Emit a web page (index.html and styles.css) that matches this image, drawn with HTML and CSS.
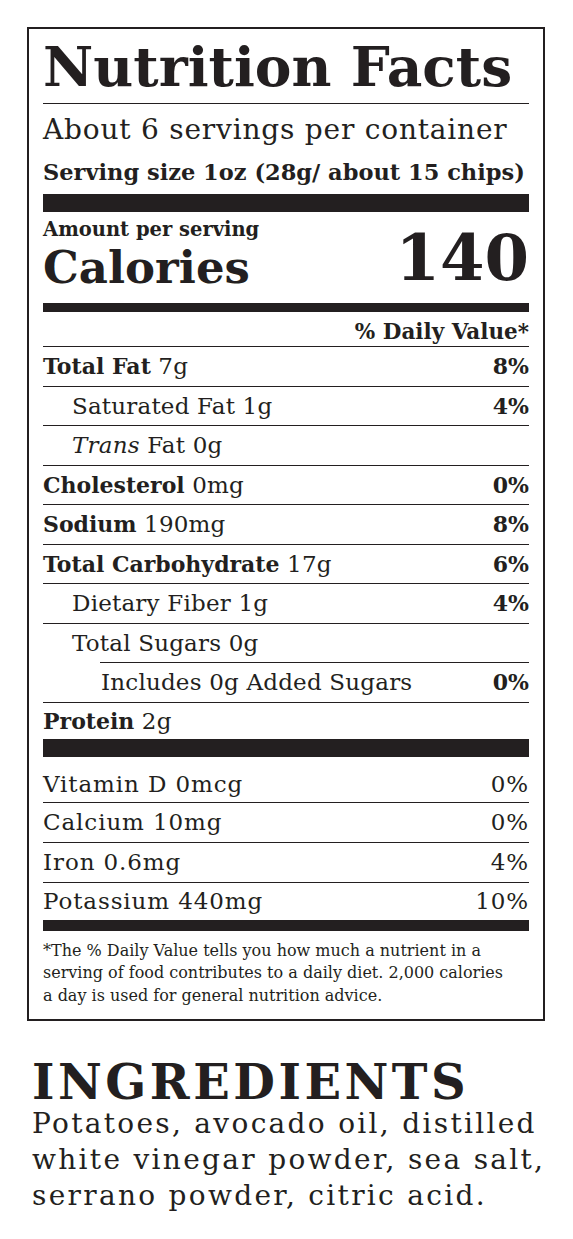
FILE: index.html
```html
<!DOCTYPE html>
<html lang="en">
<head>
    <meta charset="UTF-8">
    <meta name="viewport" content="width=device-width, initial-scale=1.0">
    <title>Nutrition Facts</title>
    <link rel="stylesheet" href="styles.css">
</head>
<body>
    <div class="label">
        <h1 class="title">Nutrition Facts</h1>
        <div class="servings">
            <p class="per-container">About 6 servings per container</p>
            <p class="size">Serving size 1oz (28g/ about 15 chips)</p>
        </div>
        <div class="calories">
            <div class="cal-left">
                <div class="amount">Amount per serving</div>
                <div class="cal-word">Calories</div>
            </div>
            <div class="cal-num">140</div>
        </div>
        <div class="dv-head">% Daily Value*</div>

        <div class="row"><span><b>Total Fat</b> 7g</span><b>8%</b></div>
        <div class="row sub"><span>Saturated Fat 1g</span><b>4%</b></div>
        <div class="row sub"><span><i>Trans</i> Fat 0g</span></div>
        <div class="row"><span><b>Cholesterol</b> 0mg</span><b>0%</b></div>
        <div class="row"><span><b>Sodium</b> 190mg</span><b>8%</b></div>
        <div class="row"><span><b>Total Carbohydrate</b> 17g</span><b>6%</b></div>
        <div class="row sub"><span>Dietary Fiber 1g</span><b>4%</b></div>
        <div class="row sub short-line"><span>Total Sugars 0g</span></div>
        <div class="row subsub"><span>Includes 0g Added Sugars</span><b>0%</b></div>
        <div class="row last"><span><b>Protein</b> 2g</span></div>

        <div class="vitamins">
            <div class="row first"><span>Vitamin D 0mcg</span><span>0%</span></div>
            <div class="row"><span>Calcium 10mg</span><span>0%</span></div>
            <div class="row"><span>Iron 0.6mg</span><span>4%</span></div>
            <div class="row last"><span>Potassium 440mg</span><span>10%</span></div>
        </div>

        <p class="footnote">*The % Daily Value tells you how much a nutrient in a<br>serving of food contributes to a daily diet. 2,000 calories<br>a day is used for general nutrition advice.</p>
    </div>

    <div class="ingredients">
        <h2>INGREDIENTS</h2>
        <p>Potatoes, avocado oil, distilled<br>white vinegar powder, sea salt,<br>serrano powder, citric acid.</p>
    </div>
</body>
</html>
```

FILE: styles.css
```css
body {
    margin: 0;
    padding: 0;
    background-color: #fff;
    color: #231f20;
    font-family: "DejaVu Serif", serif;
}
p {
    margin: 0;
}
b {
    letter-spacing: 0;
}
.label {
    width: 518px;
    margin: 27px 0 0 27px;
    border: 2px solid #231f20;
    padding: 0 14px;
    box-sizing: border-box;
}
.title {
    margin: 0;
    height: 74px;
    font-size: 55px;
    line-height: 76px;
    font-weight: bold;
    border-bottom: 1px solid #231f20;
    white-space: nowrap;
}
.servings {
    height: 90px;
    border-bottom: 18px solid #231f20;
}
.per-container {
    padding-top: 4px;
    font-size: 28px;
    line-height: 44px;
    letter-spacing: 0.8px;
    white-space: nowrap;
}
.size {
    font-size: 22.5px;
    line-height: 40px;
    font-weight: bold;
    white-space: nowrap;
}
.calories {
    height: 91px;
    display: flex;
    justify-content: space-between;
    align-items: flex-end;
    border-bottom: 9px solid #231f20;
}
.amount {
    font-size: 19.5px;
    font-weight: bold;
    line-height: 26px;
}
.cal-word {
    font-size: 45px;
    font-weight: bold;
    line-height: 50px;
    padding-bottom: 10px;
}
.cal-num {
    font-size: 64px;
    font-weight: bold;
    line-height: 70px;
    padding-bottom: 10px;
}
.dv-head {
    height: 34px;
    text-align: right;
    font-size: 21.5px;
    font-weight: bold;
    line-height: 40px;
    border-bottom: 1px solid #231f20;
}
.row {
    height: 38.5px;
    display: flex;
    justify-content: space-between;
    align-items: center;
    font-size: 23px;
    letter-spacing: 0.2px;
    white-space: nowrap;
    border-bottom: 1px solid #231f20;
}
.row b {
    font-size: 22px;
}
.row.sub {
    padding-left: 29px;
}
.row.subsub {
    padding-left: 58px;
}
.row.short-line {
    border-bottom: none;
    padding-bottom: 1px;
    background: linear-gradient(#231f20, #231f20) no-repeat right bottom / calc(100% - 57px) 1px;
}
.row.last {
    height: 36px;
    border-bottom: 18px solid #231f20;
}
.vitamins .row {
    height: 39px;
    letter-spacing: 0.9px;
}
.vitamins .row.first {
    padding-top: 9px;
    box-sizing: border-box;
    height: 46px;
}
.vitamins .row.last {
    height: 37px;
    border-bottom: 11px solid #231f20;
}
.footnote {
    font-size: 16px;
    line-height: 22.5px;
    padding: 9px 0 12px;
    white-space: nowrap;
}
.ingredients {
    padding: 37px 0 0 32px;
}
.ingredients h2 {
    margin: 0;
    font-size: 48px;
    letter-spacing: 3.5px;
    line-height: 48px;
    font-weight: bold;
}
.ingredients p {
    font-size: 28px;
    letter-spacing: 2.3px;
    line-height: 36px;
    white-space: nowrap;
}
```
